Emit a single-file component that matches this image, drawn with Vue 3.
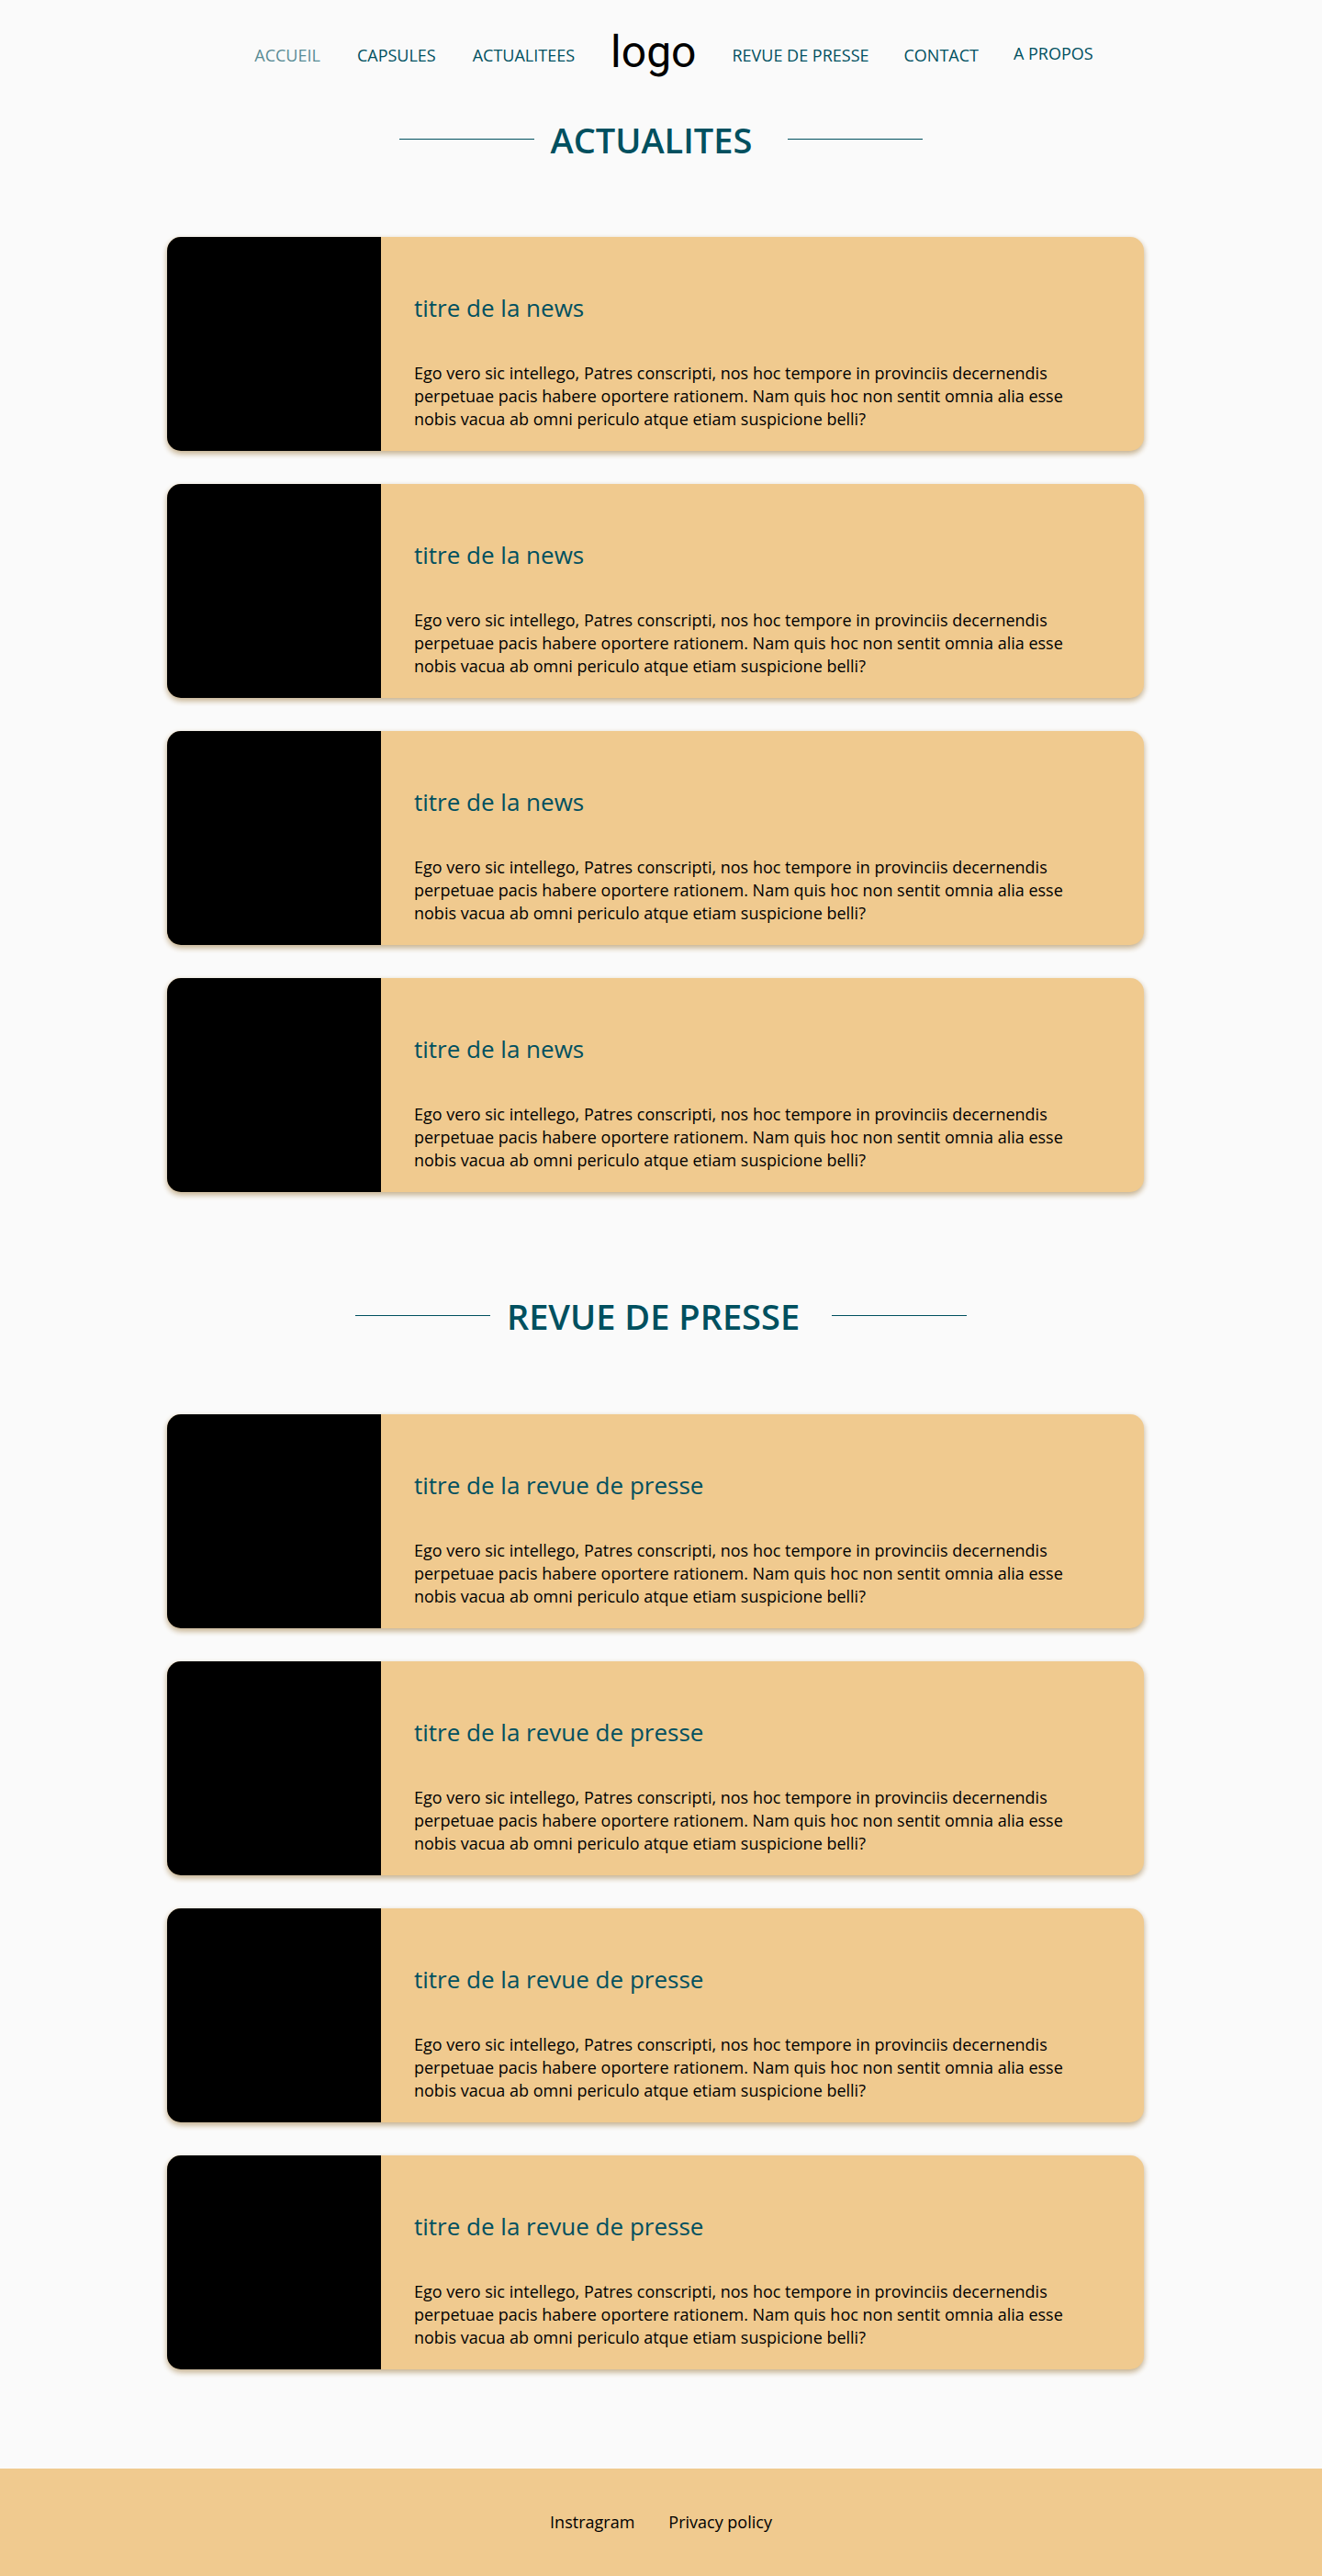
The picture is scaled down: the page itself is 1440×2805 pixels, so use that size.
<script setup>
const leftLinks = ['ACCUEIL', 'CAPSULES', 'ACTUALITEES']
const rightLinks = ['REVUE DE PRESSE', 'CONTACT', 'A PROPOS']
const text =
  'Ego vero sic intellego, Patres conscripti, nos hoc tempore in provinciis decernendis perpetuae pacis habere oportere rationem. Nam quis hoc non sentit omnia alia esse nobis vacua ab omni periculo atque etiam suspicione belli?'
const sections = [
  { id: 'actualites', heading: 'ACTUALITES', title: 'titre de la news' },
  { id: 'revue', heading: 'REVUE DE PRESSE', title: 'titre de la revue de presse' },
]
</script>

<template>
  <div class="page">
    <header>
      <nav class="nav">
        <div class="links left">
          <a v-for="(link, i) in leftLinks" :key="link" href="#" :class="{ active: i === 0 }">{{ link }}</a>
        </div>
        <a class="logo" href="#">logo</a>
        <div class="links right">
          <a v-for="link in rightLinks" :key="link" href="#" :class="{ raised: link === 'A PROPOS' }">{{ link }}</a>
        </div>
      </nav>
    </header>
    <main>
      <section v-for="s in sections" :key="s.id" :class="s.id">
        <div class="heading">
          <span class="rule"></span>
          <h1>{{ s.heading }}</h1>
          <span class="rule"></span>
        </div>
        <div class="cards">
          <article v-for="n in 4" :key="n" class="card">
            <div class="thumb"></div>
            <div class="content">
              <h2>{{ s.title }}</h2>
              <p>{{ text }}</p>
            </div>
          </article>
        </div>
      </section>
    </main>
    <footer>
      <a href="#">Instragram</a>
      <a href="#">Privacy policy</a>
    </footer>
  </div>
</template>

<style>
body {
  margin: 0;
  background: #fafafa;
}
</style>

<style scoped>
.page {
  font-family: 'Open Sans', sans-serif;
  font-size: 18px;
  line-height: 25px;
  color: #000;
}
a {
  color: inherit;
  text-decoration: none;
  white-space: nowrap;
}
.nav {
  display: flex;
  justify-content: center;
  align-items: center;
  gap: 39px;
  padding: 29px 0 0 28px;
  color: #00505f;
}
.links {
  display: flex;
  align-items: center;
}
.left {
  gap: 40px;
}
.right {
  gap: 38px;
}
.active {
  opacity: 0.65;
}
.logo {
  margin-bottom: 6px;
  font-family: Roboto, sans-serif;
  font-size: 48px;
  line-height: 56px;
  color: #000;
}
.raised {
  padding-bottom: 4px;
}
.heading {
  display: flex;
  justify-content: center;
  align-items: center;
  color: #00505f;
}
.actualites .heading {
  padding: 35px 0 80px;
}
.revue .heading {
  padding: 109px 0 81px;
}
h1 {
  margin: 0 39px 0 18px;
  font-size: 38px;
  line-height: 52px;
  font-weight: 600;
}
.revue h1 {
  margin: 0 35px 0 18px;
}
.rule {
  width: 147px;
  height: 1px;
  margin-bottom: 1px;
  background: #00505f;
}
.cards {
  display: flex;
  flex-direction: column;
  gap: 36px;
  padding: 0 194px 0 182px;
}
.card {
  display: flex;
  min-height: 233px;
  border-radius: 15px;
  background: #f0ca8f;
  box-shadow: 0 3px 6px rgba(0, 0, 0, 0.16), 0 3px 6px #e8d0a8;
}
.thumb {
  flex: none;
  width: 233px;
  border-radius: 15px 0 0 15px;
  background: #000;
}
.content {
  padding: 59px 76px 22px 36px;
}
h2 {
  margin: 0 0 41px;
  font-size: 26px;
  line-height: 36px;
  font-weight: 400;
  color: #00505f;
}
p {
  margin: 0;
}
footer {
  display: flex;
  justify-content: center;
  gap: 37px;
  margin-top: 108px;
  padding: 46px 0;
  background: #f0ca8f;
}
</style>
